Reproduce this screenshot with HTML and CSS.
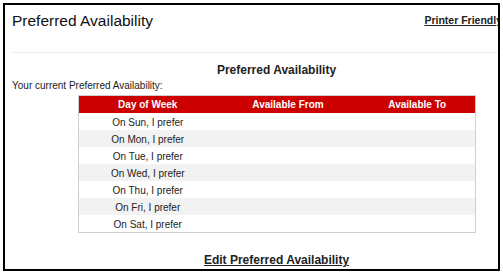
FILE: index.html
```html
<!DOCTYPE html>
<html>
<head>
<meta charset="utf-8">
<link rel="stylesheet" href="styles.css">
</head>
<body>
<div class="frame">
  <div class="header">
    <div class="page-title">Preferred Availability</div>
    <a class="printer" href="#">Printer Friendly</a>
  </div>
  <div class="block">
    <div class="section-title">Preferred Availability</div>
  </div>
  <div class="intro">Your current Preferred Availability:</div>
  <div class="block">
    <table class="avail">
      <colgroup>
        <col class="c1"><col class="c2"><col class="c3">
      </colgroup>
      <thead>
        <tr><th>Day of Week</th><th>Available From</th><th>Available To</th></tr>
      </thead>
      <tbody>
        <tr><td>On Sun, I prefer</td><td></td><td></td></tr>
        <tr><td>On Mon, I prefer</td><td></td><td></td></tr>
        <tr><td>On Tue, I prefer</td><td></td><td></td></tr>
        <tr><td>On Wed, I prefer</td><td></td><td></td></tr>
        <tr><td>On Thu, I prefer</td><td></td><td></td></tr>
        <tr><td>On Fri, I prefer</td><td></td><td></td></tr>
        <tr><td>On Sat, I prefer</td><td></td><td></td></tr>
      </tbody>
    </table>
    <a class="edit" href="#">Edit Preferred Availability</a>
  </div>
</div>
</body>
</html>
```
FILE: styles.css
```css
html, body {
  margin: 0;
  padding: 0;
  background: #fff;
}
body {
  font-family: "Liberation Sans", Arial, sans-serif;
  color: #111;
}
.frame {
  margin: 3px 0 0 3px;
  width: 497px;
  height: 268px;
  box-sizing: border-box;
  border: 2px solid #000;
  overflow: hidden;
  padding-left: 7px;
}
.header {
  display: flex;
  align-items: flex-start;
  padding-top: 7px;
  height: 40px;
  border-bottom: 1px solid #ececec;
  white-space: nowrap;
}
.page-title {
  font-size: 15.5px;
  line-height: 18px;
  color: #111;
}
.printer {
  font-size: 10.5px;
  font-weight: bold;
  line-height: 13px;
  margin-top: 2px;
  margin-left: auto;
  margin-right: -4px;
  color: #222;
  text-decoration: underline;
}
.block {
  margin-left: 66px;
  width: 397px;
  text-align: center;
}
.section-title {
  font-size: 12px;
  font-weight: bold;
  line-height: 14px;
  margin-top: 10px;
  color: #222;
}
.intro {
  font-size: 10px;
  line-height: 12px;
  margin-top: 3px;
  color: #222;
}
.avail {
  margin-top: 3px;
  width: 397px;
  border-collapse: collapse;
  table-layout: fixed;
  border: 1px solid #cfcfcf;
  font-size: 10px;
}
.c1 { width: 138px; }
.c2 { width: 143px; }
.c3 { width: 116px; }
.avail th {
  background: #cc0000;
  color: #fff;
  font-weight: bold;
  height: 17px;
  padding: 0;
  line-height: 12px;
}
.avail td {
  height: 17px;
  padding: 0;
  line-height: 14px;
  vertical-align: bottom;
  color: #222;
}
.avail tbody tr:nth-child(even) td {
  background: #f2f2f2;
}
.edit {
  display: inline-block;
  margin-top: 20px;
  font-size: 12px;
  font-weight: bold;
  line-height: 14px;
  color: #222;
  text-decoration: underline;
}
```
